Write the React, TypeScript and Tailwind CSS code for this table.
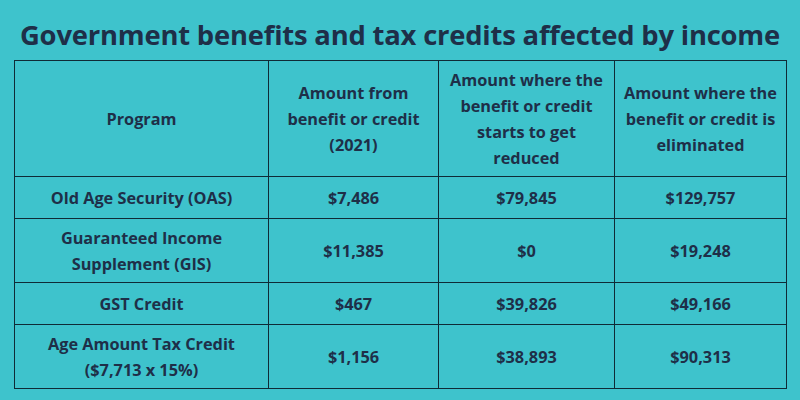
const rows = [
  { program: ["Old Age Security (OAS)"], amount: "$7,486", reduced: "$79,845", eliminated: "$129,757", h: "h-[42px]" },
  { program: ["Guaranteed Income", "Supplement (GIS)"], amount: "$11,385", reduced: "$0", eliminated: "$19,248", h: "h-[64px]" },
  { program: ["GST Credit"], amount: "$467", reduced: "$39,826", eliminated: "$49,166", h: "h-[42px]" },
  { program: ["Age Amount Tax Credit", "($7,713 x 15%)"], amount: "$1,156", reduced: "$38,893", eliminated: "$90,313", h: "h-[64px]" },
];

export default function App() {
  return (
    <div
      className="w-[800px] h-[400px] bg-[#3ec3cc] text-[#1e2f48] overflow-hidden"
      style={{ fontFamily: '"Open Sans", "Liberation Sans", sans-serif' }}
    >
      <h1 className="text-center text-[27.4px] font-bold leading-none pt-[21px] h-[60px] tracking-[-0.2px]">
        Government benefits and tax credits affected by income
      </h1>
      <table className="ml-[14px] w-[772px] border-collapse table-fixed text-[16.3px] font-bold leading-[26px] text-center">
        <colgroup>
          <col className="w-[254px]" />
          <col className="w-[170px]" />
          <col className="w-[176px]" />
          <col className="w-[172px]" />
        </colgroup>
        <thead>
          <tr className="h-[116px]">
            <th className="border-[1.5px] border-[#0f2b36] px-1">Program</th>
            <th className="border-[1.5px] border-[#0f2b36] px-1">
              Amount from
              <br />
              benefit or credit
              <br />
              (2021)
            </th>
            <th className="border-[1.5px] border-[#0f2b36] px-1">
              Amount where the
              <br />
              benefit or credit
              <br />
              starts to get
              <br />
              reduced
            </th>
            <th className="border-[1.5px] border-[#0f2b36] px-1">
              Amount where the
              <br />
              benefit or credit is
              <br />
              eliminated
            </th>
          </tr>
        </thead>
        <tbody>
          {rows.map((r) => (
            <tr key={r.amount} className={r.h}>
              <td className="border-[1.5px] border-[#0f2b36] px-1">
                {r.program.map((p, i) => (
                  <div key={i}>{p}</div>
                ))}
              </td>
              <td className="border-[1.5px] border-[#0f2b36]">{r.amount}</td>
              <td className="border-[1.5px] border-[#0f2b36]">{r.reduced}</td>
              <td className="border-[1.5px] border-[#0f2b36]">{r.eliminated}</td>
            </tr>
          ))}
        </tbody>
      </table>
    </div>
  );
}
